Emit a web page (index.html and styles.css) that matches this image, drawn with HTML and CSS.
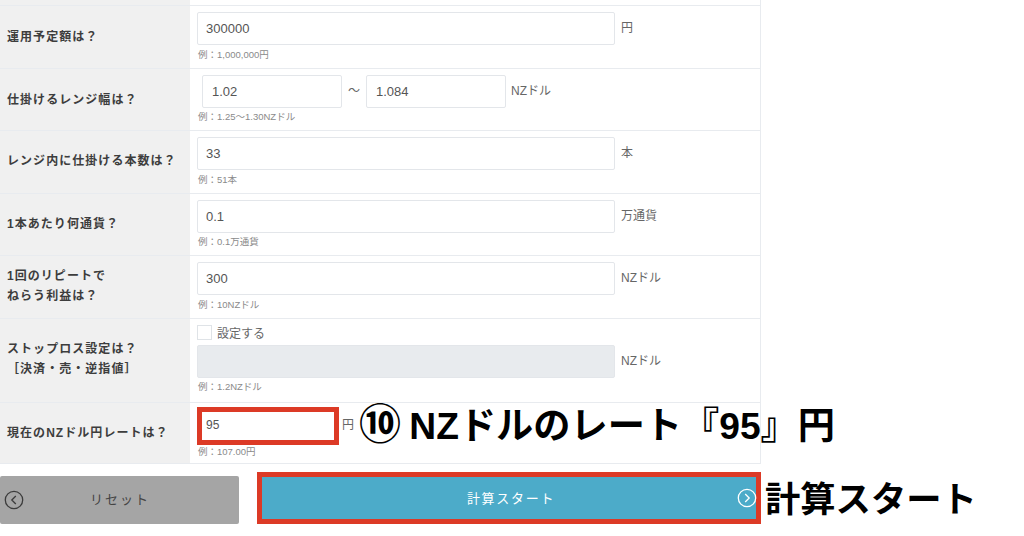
FILE: index.html
```html
<!DOCTYPE html>
<html lang="ja">
<head>
<meta charset="utf-8">
<title>計算フォーム</title>
<link rel="stylesheet" href="styles.css">
</head>
<body>
<main class="page">
  <div class="table">
    <div class="row stub"><div class="label"></div><div class="cell"></div></div>
    <div class="row">
      <div class="label">運用予定額は？</div>
      <div class="cell">
        <div class="line"><input class="input wide" value="300000"><span class="unit">円</span></div>
        <p class="hint">例：1,000,000円</p>
      </div>
    </div>
    <div class="row">
      <div class="label">仕掛けるレンジ幅は？</div>
      <div class="cell">
        <div class="line range"><input class="input short" value="1.02"><span class="tilde">〜</span><input class="input short" value="1.084"><span class="unit">NZドル</span></div>
        <p class="hint">例：1.25〜1.30NZドル</p>
      </div>
    </div>
    <div class="row">
      <div class="label">レンジ内に仕掛ける本数は？</div>
      <div class="cell">
        <div class="line"><input class="input wide" value="33"><span class="unit">本</span></div>
        <p class="hint">例：51本</p>
      </div>
    </div>
    <div class="row">
      <div class="label">1本あたり何通貨？</div>
      <div class="cell">
        <div class="line"><input class="input wide" value="0.1"><span class="unit">万通貨</span></div>
        <p class="hint">例：0.1万通貨</p>
      </div>
    </div>
    <div class="row">
      <div class="label">1回のリピートで<br>ねらう利益は？</div>
      <div class="cell">
        <div class="line"><input class="input wide" value="300"><span class="unit">NZドル</span></div>
        <p class="hint">例：10NZドル</p>
      </div>
    </div>
    <div class="row tall">
      <div class="label">ストップロス設定は？<br>［決済・売・逆指値］</div>
      <div class="cell compact">
        <label class="check"><span class="box"></span>設定する</label>
        <div class="line"><input class="input wide" disabled><span class="unit">NZドル</span></div>
        <p class="hint">例：1.2NZドル</p>
      </div>
    </div>
    <div class="row last">
      <div class="label">現在のNZドル円レートは？</div>
      <div class="cell rate">
        <div class="line"><input class="input marked" value="95"><span class="unit near">円</span></div>
        <p class="hint">例：107.00円</p>
      </div>
    </div>
  </div>
  <div class="buttons">
    <button class="btn reset" type="button">
      <svg class="ring" viewBox="0 0 20 20"><circle cx="10" cy="10" r="8.7"/><path d="M11.8 6 7.8 10l4 4"/></svg>
      <span class="btn-text">リセット</span>
    </button>
    <button class="btn start" type="button">
      <span class="btn-text">計算スタート</span>
      <svg class="ring" viewBox="0 0 20 20"><circle cx="10" cy="10" r="8.7"/><path d="M8.2 6l4 4-4 4"/></svg>
    </button>
  </div>
  <div class="note note-rate"><span class="num">⑩</span> NZドルのレート『95』円</div>
  <div class="note note-start">計算スタート</div>
</main>
</body>
</html>
```
FILE: styles.css
```css
* { box-sizing: border-box; }
html, body { margin: 0; padding: 0; background: #fff; }
body { font-family: "Liberation Sans", "Noto Sans CJK JP", sans-serif; overflow: hidden; }
.page { position: relative; width: 1024px; height: 536px; overflow: hidden; }
.table { width: 761px; }
.row { display: flex; height: 62.5px; border-bottom: 1px solid #e8ebef; }
.row.stub { height: 6px; }
.row.tall { height: 84px; }
.row.last { height: 61px; }
.label {
  display: block; width: 190px; flex: none; background: #f0f0f0;
  padding: 20px 7px 0; font-size: 12px; line-height: 20px; font-weight: 700; color: #3d3d3d; letter-spacing: 1.05px;
}
.row.stub .label { padding: 0; }
.row:nth-child(2) .label { padding-top: 21px; }
.row:nth-child(3) .label { padding-top: 21px; }
.row:nth-child(6) .label { padding-top: 10px; }
.row:nth-child(7) .label { padding-top: 20px; }
.cell { flex: 1; padding: 6px 7px 0; border-right: 1px solid #e8ebef; }
.row.stub .cell { padding: 0; }
.cell.compact { padding-top: 5px; }
.cell.rate { padding-top: 4px; }
.line { display: flex; align-items: flex-start; }
.range { padding-left: 6px; }
.input {
  display: block; height: 33px; border: 1px solid #e3e6ea; border-radius: 2px; background: #fff;
  padding: 0 8px; font: 13px "Liberation Sans", sans-serif; color: #555; outline: none;
}
.input.wide { width: 418px; }
.input.short { width: 140px; padding: 0 9px; }
.range .input:first-child { margin-left: -1px; }
.input:disabled { background: #e8ebee; }
.input.marked { width: 142px; height: 38px; border: 5px solid #dc3a26; border-radius: 0; padding: 0 4px 2px; font-size: 12px; }
.unit { margin-left: 6px; margin-top: 8px; font-size: 12px; line-height: 16px; color: #666; }
.range .unit { margin-left: 5px; }
.unit.near { margin-left: 3px; margin-top: 10px; }
.tilde { width: 24px; text-align: center; margin-top: 7px; font-size: 12px; line-height: 18px; color: #666; }
.hint { margin: 3.5px 0 0 1px; font-size: 9.5px; line-height: 12px; color: #8a8a8a; }
.rate .hint { margin-top: 1px; }
.check { display: flex; align-items: center; height: 17px; margin-bottom: 4px; font-size: 12px; color: #666; }
.box { width: 15px; height: 15px; margin-right: 5px; border: 1px solid #dfe3e7; background: #fff; }
.buttons { display: flex; justify-content: space-between; align-items: flex-start; width: 761px; margin-top: 12px; }
.btn {
  position: relative; height: 48px; border: 0; padding: 0; font-family: inherit; font-size: 13px;
}
.btn-text { position: relative; top: -1px; }
.reset { width: 239px; background: #a5a5a5; color: #444; border-radius: 2px; letter-spacing: 2px; padding-right: 1px; padding-left: 2px; }
.start { width: 504px; height: 52px; margin-top: -4px; background: #4cabc9; border: 5px solid #dc3a26; color: #fff; letter-spacing: 1.7px; padding-left: 4px; }
.start .btn-text { top: 0; }
.ring { position: absolute; top: 50%; width: 20px; height: 20px; transform: translateY(-50%); fill: none; stroke-width: 1.3; }
.reset .ring { left: 4px; stroke: #3c3c3c; }
.start .ring { right: -1px; stroke: #fff; }
.note { position: absolute; font-weight: 700; color: #000; white-space: nowrap; }
.note-rate { left: 359px; top: 402px; font-size: 37.2px; line-height: 48px; }
.num { font-family: "Noto Sans CJK JP", sans-serif; font-weight: 700; font-size: 42px; line-height: 0; margin-right: -2px; }
.note-start { left: 765px; top: 478px; font-size: 35.3px; line-height: 44px; }
```
